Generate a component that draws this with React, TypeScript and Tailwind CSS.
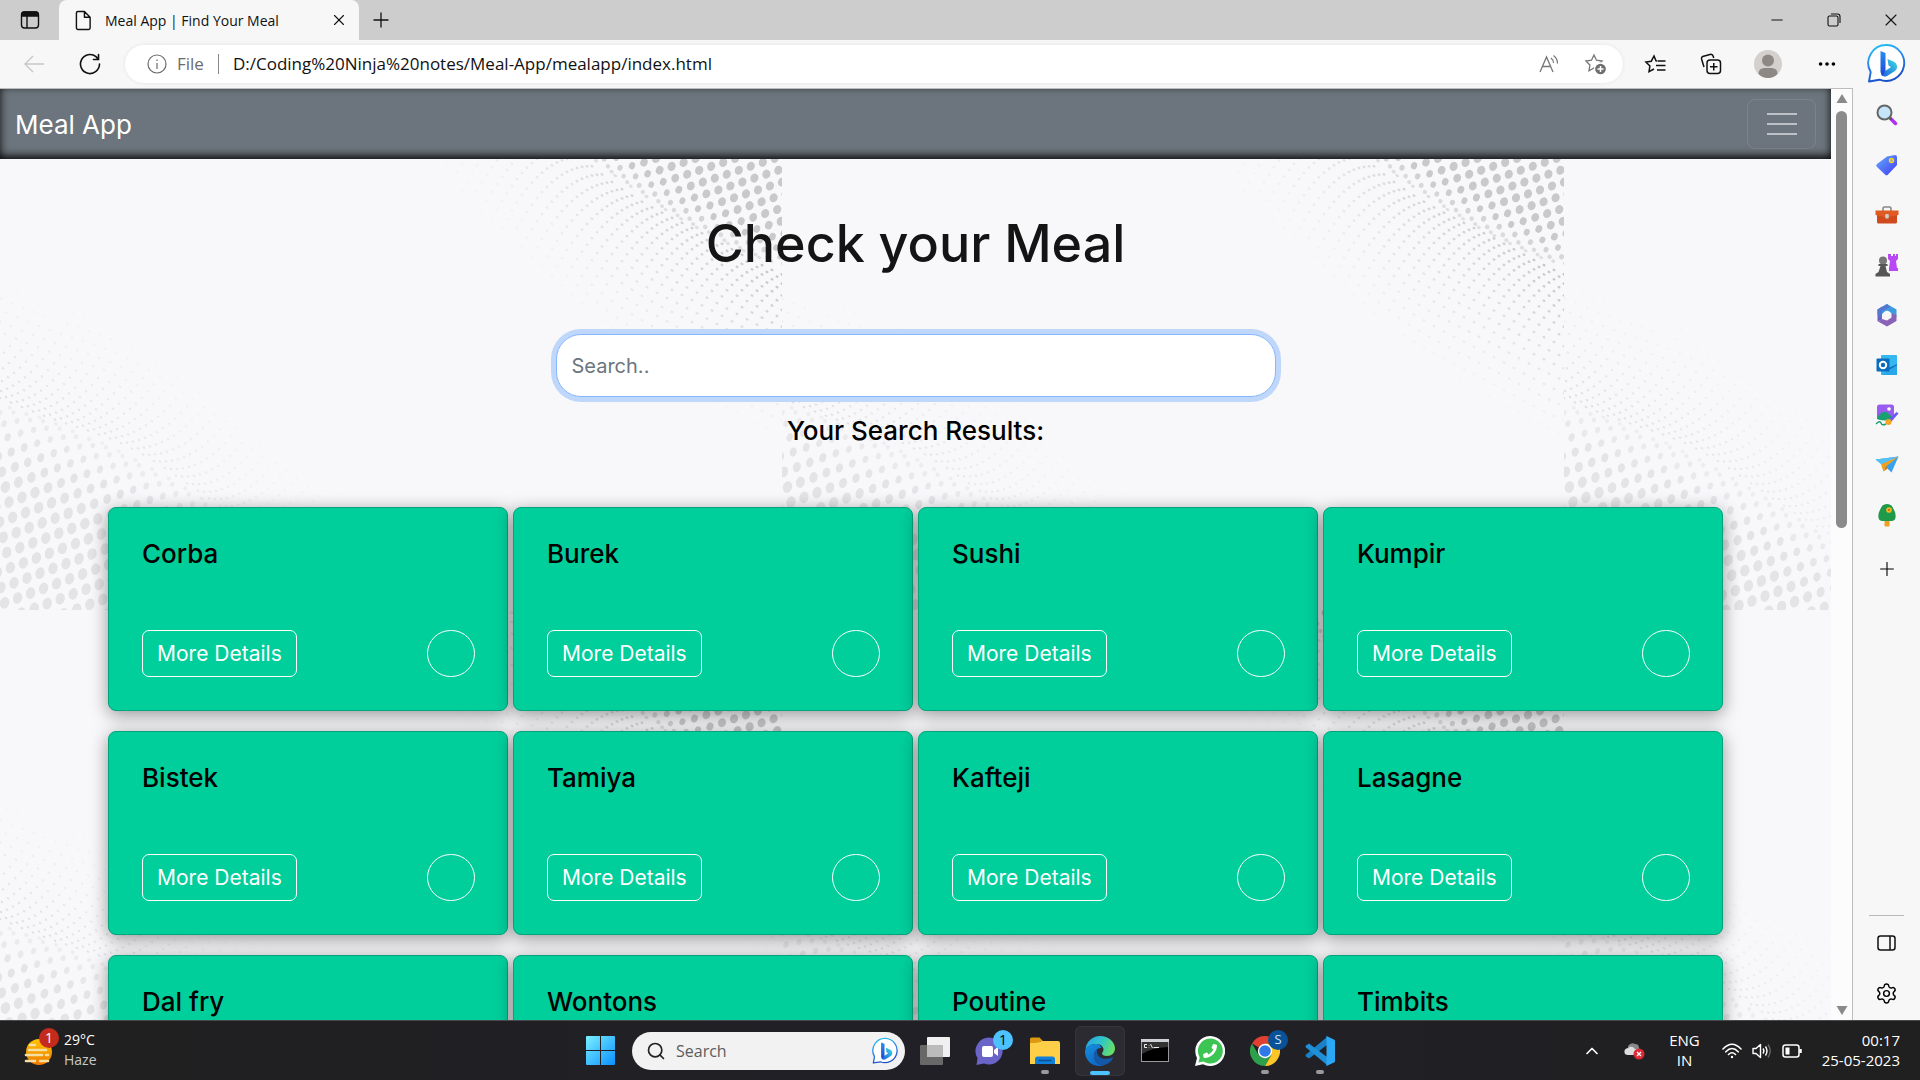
import React from "react";
import { ChevronUp, Minus, MoreHorizontal, Plus, Search, Settings, X } from "lucide-react";
import { FaPhoneAlt } from "react-icons/fa";

const meals = [
  "Corba", "Burek", "Sushi", "Kumpir",
  "Bistek", "Tamiya", "Kafteji", "Lasagne",
  "Dal fry", "Wontons", "Poutine", "Timbits",
];

type Dot = { x: number; y: number; rx: number; ry: number; rot: number; fill: string; o: number };

const TILE_W = 782;
const TILE_H = 521;

const soft = (v: number, s: number) => s * Math.log(1 + Math.exp(v / s));

function buildDots(): Dot[] {
  const dots: Dot[] = [];
  const lowCrease = (x: number) => 314 + 0.3 * x + 0.0008 * x * x;
  for (let j = -12; j < 26; j++) {
    for (let i = -8; i < 36; i++) {
      const x = 13 * i + 3.6 * j + 4;
      if (x < -6 || x > 380) continue;
      const d = 334 + 16.5 * j - 0.37 * x - lowCrease(x);
      if (d < -26) continue;
      const depth = soft(d, 11);
      const y = lowCrease(x) + depth;
      if (y > TILE_H + 8) continue;
      const g = Math.min(1, depth / 80);
      dots.push({ x, y, rx: 2 + 2.6 * g, ry: 1.1 + 4.8 * Math.sqrt(g), rot: 20 - 5 * g, fill: "#e4e4e7", o: Math.min(1, 0.5 + g) });
    }
  }
  for (let k = 0; k < 17; k++) {
    for (let i = -20; i < 40; i++) {
      const x = 11 * i + 6 * k;
      if (x < 0 || x > 440) continue;
      const gap = 5 + k * (3 + k * 0.36);
      const y = lowCrease(x) - gap + 3 * Math.sin(x / 28);
      if (y > TILE_H) continue;
      const o = Math.max(0, 1 - gap / 135) * Math.max(0, 1 - x / 460);
      if (o > 0.04) dots.push({ x, y, rx: 1.5, ry: 1, rot: 35, fill: "#dddde0", o });
    }
  }

  const highCrease = (x: number) => {
    const t = TILE_W - x;
    return 178 - 0.36 * t - 0.0011 * t * t;
  };
  for (let j = -14; j < 26; j++) {
    for (let i = -10; i < 34; i++) {
      const x = TILE_W + 6 - 12 * i - 3.6 * j;
      if (x < 440 || x > TILE_W + 6) continue;
      const d = highCrease(x) - (158 - 13 * j + 0.33 * (TILE_W - x));
      if (d < -24) continue;
      const depth = soft(d, 9);
      const y = highCrease(x) - depth;
      if (y < -8) continue;
      const g = Math.min(1, depth / 42);
      dots.push({ x, y, rx: 2 + 2 * g, ry: 1 + 3.6 * Math.sqrt(g), rot: 22, fill: "#c9c9cb", o: Math.min(1, 0.5 + g) });
    }
  }
  for (let k = 0; k < 19; k++) {
    for (let i = -20; i < 60; i++) {
      const x = TILE_W - 10 * i - 5 * k;
      if (x < 260 || x > TILE_W) continue;
      const gap = 5 + k * (4 + k * 0.32);
      const y = highCrease(x) + gap + 3 * Math.sin(x / 30);
      if (y < 0) continue;
      const o = Math.max(0, 1 - gap / 175) * Math.max(0, 1 - (TILE_W - x) / 460);
      if (o > 0.04) dots.push({ x, y, rx: 1.6, ry: 1.2, rot: 30, fill: "#c4c4c7", o });
    }
  }
  return dots;
}

const dots = buildDots();

function Backdrop() {
  return (
    <svg className="absolute inset-0 h-full w-full" aria-hidden="true">
      <defs>
        <pattern id="halftone" width={TILE_W} height={TILE_H} patternUnits="userSpaceOnUse" y={-70}>
          {dots.map((d, n) => (
            <ellipse key={n} cx={d.x} cy={d.y} rx={d.rx} ry={d.ry} fill={d.fill} opacity={d.o} transform={`rotate(${d.rot} ${d.x} ${d.y})`} />
          ))}
        </pattern>
      </defs>
      <rect width="100%" height="100%" fill="url(#halftone)" />
    </svg>
  );
}

function BingBubble({ id, className }: { id: string; className: string }) {
  return (
    <svg viewBox="0 0 40 40" className={className} aria-hidden="true">
      <defs>
        <linearGradient id={`${id}-ring`} x1="0" y1="0" x2="0.3" y2="1">
          <stop offset="0" stopColor="#22c8f0" />
          <stop offset="0.5" stopColor="#2a86ee" />
          <stop offset="1" stopColor="#1a50c8" />
        </linearGradient>
        <linearGradient id={`${id}-b`} x1="0" y1="0" x2="0" y2="1">
          <stop offset="0" stopColor="#2b8df0" />
          <stop offset="1" stopColor="#1b48d8" />
        </linearGradient>
        <linearGradient id={`${id}-bowl`} x1="0" y1="1" x2="1" y2="0">
          <stop offset="0" stopColor="#1d5be0" />
          <stop offset="1" stopColor="#3be0e0" />
        </linearGradient>
      </defs>
      <path d="M20 2a18 18 0 1 1-7.500 34.700L2 38.500l1.700-9.500A18 18 0 0 1 20 2z" fill="#fff" stroke={`url(#${id}-ring)`} strokeWidth="1.900" strokeLinejoin="round" />
      <path d="M20.500 16l6 2.500a5.500 5.500 0 0 1 1.500 9.500L20 33c-3 1.500-6 0-6-2.500l8-5 2-1.500-2.500-1.500z" fill={`url(#${id}-bowl)`} />
      <path d="M13.500 8l5 2v17.500l-2 4.500c-2-.2-3-1.500-3-3.500z" fill={`url(#${id}-b)`} />
    </svg>
  );
}

const rail: { name: string; icon: React.ReactNode }[] = [
  { name: "Search", icon: <><path d="M15.500 15.500l5 5" stroke="#b030f0" strokeWidth="3.500" strokeLinecap="round" /><path d="M14 14l2.500 2.500" stroke="#555" strokeWidth="2" /><circle cx="9.500" cy="9.500" r="7" fill="#c5e6fa" stroke="#666" strokeWidth="2" /></> },
  { name: "Shopping", icon: <><defs><linearGradient id="tagG" x1="0" y1="0" x2="1" y2="1"><stop offset="0" stopColor="#62b0ff" /><stop offset="1" stopColor="#4338f0" /></linearGradient></defs><path d="M12 3.500 20 2a2 2 0 0 1 2 2v8L13 21.500a2 2 0 0 1-3 0L2 14a2 2 0 0 1 0-3z" fill="url(#tagG)" /><circle cx="16.500" cy="7.500" r="2" fill="#9ab" stroke="#ffcf20" strokeWidth="1.500" /></> },
  { name: "Tools", icon: <><path d="M8 8V5.500q0-1.500 1.500-1.500h5q1.500 0 1.500 1.500V8" fill="none" stroke="#888" strokeWidth="1.600" /><rect x="2" y="9" width="20" height="11.500" rx="1.500" fill="#cf4a1c" /><path d="M0.500 7.500h23V12l-9 2h-5l-9-2z" fill="#e05a22" /><rect x="10.200" y="11" width="3.600" height="4.500" rx="1" fill="#ccc" /></> },
  { name: "Games", icon: <><path d="M14 1h2v2h2V1h2v2h1V1h2v5l-2 2 1 7h1v3h-9v-3l1-7-2-2V1z" fill="#b848f5" /><circle cx="8" cy="7.500" r="4" fill="#777" /><path d="M3.500 11h9v2h-2l1.500 6 3 2v2.500H.500V21l3-2L5.500 13h-2z" fill="#555" /></> },
  { name: "Microsoft 365", icon: <><path d="M12 1l9.500 5.500v7L16 10 12 7.500 7 11V4z" fill="#3d9be0" /><path d="M7 3.500v13l-4.500 2V6.500z" fill="#6a62c8" /><path d="M21.500 12v6L12 23.500 3 18.500l4-2.500 5 1.500 4.500-3V10z" fill="#8a63b8" /><path d="M12 1L2.500 6.500V12L7 15V8l8-4z" fill="#5676d0" /><circle cx="12" cy="12" r="4" fill="#f7f7f7" /></> },
  { name: "Outlook", icon: <><rect x="6" y="2" width="16" height="20" rx="1" fill="#35b8f1" /><path d="M6 12l16 8V11l-8 4z" fill="#1267b4" /><path d="M22 12v10H6z" fill="#28a8ea" /><rect x="1.500" y="5.500" width="13" height="13" rx="1" fill="#0a6cbd" /><circle cx="8" cy="12" r="3.200" fill="none" stroke="#fff" strokeWidth="2" /></> },
  { name: "Image creator", icon: <><rect x="2" y="1.500" width="17" height="15" rx="2.500" fill="#9a5cf0" /><path d="M2 15q6-9 11-5l6 6q-8 3-17 0z" fill="#18a070" /><circle cx="14" cy="6" r="1.800" fill="#fff" /><path d="M13.500 16.500L21.500 9l2 1.500-7.500 8.500z" fill="#6a5af0" /><circle cx="13.500" cy="19" r="3" fill="#f5a623" /><path d="M1 21q4-4 5-1t5 1" stroke="#18a070" strokeWidth="1.400" fill="none" /></> },
  { name: "Drop", icon: <><path d="M0.500 6.500l23-3-7 16-5-5z" fill="#3aa0f0" /><path d="M0.500 6.500l23-3L7 12z" fill="#56c0f5" /><path d="M23.500 3.500L6 11.500l2.500 7 2.500-5z" fill="#f0a020" /><path d="M11 13l-2.500 5.500 4-3z" fill="#d07808" /></> },
  { name: "Tree", icon: <><rect x="9.500" y="15" width="5" height="8.500" rx="1" fill="#f0a020" /><path d="M12 1c5 0 6 4 7 6 2 3 3 11-2 11H7C2 18 3 10 5 7c1-2 2-6 7-6z" fill="#1f9a4a" /><circle cx="14" cy="7" r="2.800" fill="#f5b820" /><circle cx="14" cy="7" r="1.100" fill="#d86010" /></> },
];

const railButton = "flex h-[50px] w-full items-center justify-center";

function SideRail() {
  return (
    <aside aria-label="Sidebar" className="flex w-[67px] shrink-0 flex-col items-center bg-[#f7f7f7]">
      <button aria-label="Bing chat" className="flex h-[50px] items-center justify-center pb-1">
        <BingBubble id="rail-bing" className="h-10 w-10" />
      </button>
      {rail.map((r) => (
        <button key={r.name} aria-label={r.name} className={railButton}>
          <svg viewBox="0 0 24 24" className="h-6 w-6">{r.icon}</svg>
        </button>
      ))}
      <button aria-label="Customize" className="mt-1 flex h-[50px] items-center justify-center">
        <Plus className="h-[22px] w-[22px]" strokeWidth={1.2} />
      </button>
      <div className="mt-auto h-px w-[35px] bg-[#b8b8b8]" />
      <button aria-label="Hide sidebar" className="mt-0.5 flex h-[50px] items-center justify-center">
        <svg viewBox="0 0 20 18" className="h-[18px] w-5" fill="none" stroke="#111" strokeWidth="1.500">
          <rect x="1" y="2" width="17" height="14" rx="2.500" /><path d="M13 2v14" />
        </svg>
      </button>
      <button aria-label="Settings" className="mb-0.5 flex h-[50px] items-center justify-center">
        <Settings className="h-[23px] w-[23px]" strokeWidth={1.5} />
      </button>
    </aside>
  );
}

function TabStrip() {
  return (
    <header className="flex h-10 shrink-0 items-stretch bg-[#cdcdcd] text-[#111]">
      <button aria-label="Tab actions" className="flex w-[59px] items-center justify-center">
        <svg viewBox="0 0 20 20" className="h-5 w-5" fill="none" stroke="#111" strokeWidth="1.400">
          <rect x="1.500" y="2" width="17" height="16" rx="3" /><path d="M7 6v12" /><path d="M2 5V4q0-2 2-2h12q2 0 2 2v2H2z" fill="#111" />
        </svg>
      </button>
      <div className="flex w-[300px] items-center rounded-t-lg bg-[#f7f7f7] pr-2 pl-4">
        <svg viewBox="0 0 18 22" className="h-[21px] w-[17px]" fill="none" stroke="#111" strokeWidth="1.500" strokeLinejoin="round">
          <path d="M3 1.500h7l6 6V19q0 1.500-1.500 1.500h-11.500Q1.500 20.500 1.500 19V3q0-1.500 1.500-1.500zM10 1.500v6h6" />
        </svg>
        <span className="ml-[13px] flex-1 font-['Open_Sans'] text-[14px]">Meal App | Find Your Meal</span>
        <button aria-label="Close tab" className="flex w-6 items-center justify-center"><X className="h-[18px] w-[18px]" strokeWidth={1.5} /></button>
      </div>
      <button aria-label="New tab" className="flex w-11 items-center justify-center"><Plus className="h-6 w-6" strokeWidth={1.3} /></button>
      <div className="ml-auto flex">
        <button aria-label="Minimize" className="flex w-[57px] items-center justify-center"><Minus className="h-[18px] w-[18px]" strokeWidth={1.3} /></button>
        <button aria-label="Restore" className="flex w-[57px] items-center justify-center">
          <svg viewBox="0 0 14 14" className="h-[14px] w-[14px]" fill="none" stroke="#111" strokeWidth="1.100">
            <rect x="1" y="3" width="10" height="10" rx="1.500" /><path d="M4 1h6.500Q13 1 13 3.500V10" />
          </svg>
        </button>
        <button aria-label="Close" className="flex w-[58px] items-center justify-center"><X className="h-5 w-5" strokeWidth={1.3} /></button>
      </div>
    </header>
  );
}

const STAR = "M10 2l2.500 5.200 5.600.8-4 4 .9 5.700L10 15l-5 2.700.900-5.700-4-4 5.600-.8z";

function Toolbar() {
  return (
    <div className="flex h-12 shrink-0 items-center bg-[#f7f7f7] pl-1.5">
      <button aria-label="Back" className="flex w-14 justify-center">
        <svg viewBox="0 0 20 20" className="h-5 w-5" fill="none" stroke="#c8c8c8" strokeWidth="1.400"><path d="M9 2l-8 8 8 8M1 10h19" /></svg>
      </button>
      <button aria-label="Refresh" className="flex w-14 justify-center">
        <svg viewBox="0 0 22 22" className="h-[22px] w-[22px]" fill="none" stroke="#111" strokeWidth="1.600" strokeLinecap="round"><path d="M20.500 11a9.500 9.500 0 1 1-3.500-7.300L19 6M19.500 1.500V6.500h-5" /></svg>
      </button>
      <div className="mr-1 ml-[7px] flex h-[38px] flex-1 items-center rounded-full bg-white pr-4 pl-[22px] font-['Open_Sans'] shadow-[0_0_4px_rgba(0,0,0,0.08)]">
        <svg viewBox="0 0 20 20" className="h-5 w-5" fill="none" stroke="#6b6b6b" strokeWidth="1.200"><circle cx="10" cy="10" r="9" /><path d="M10 9v6M10 5.500v1.500" /></svg>
        <span className="ml-2.5 text-[17px] text-[#6b6b6b]">File</span>
        <span className="mx-3.5 h-5 w-px bg-[#888]" />
        <input aria-label="Address" readOnly value="D:/Coding%20Ninja%20notes/Meal-App/mealapp/index.html" className="min-w-0 flex-1 bg-transparent text-[17px] text-[#111] outline-none" />
        <button aria-label="Read aloud" className="mr-6">
          <svg viewBox="0 0 21 20" className="h-5 w-[21px]" fill="none" stroke="#777" strokeWidth="1.300"><path d="M1 18L7.500 3 14 18M3.500 12.500h8M12 4q2.500 2 2.500 5M14.500 1.500q4 3 4 8" /></svg>
        </button>
        <button aria-label="Add to favorites">
          <svg viewBox="0 0 23 22" className="h-[22px] w-[23px]" fill="none" stroke="#777" strokeWidth="1.300"><path d={STAR} /><circle cx="16.500" cy="16" r="6" fill="#6f6f6f" stroke="#fff" /><path d="M16.500 13v6M13.500 16h6" stroke="#fff" strokeWidth="1.500" /></svg>
        </button>
      </div>
      <button aria-label="Favorites" className="flex w-14 justify-center">
        <svg viewBox="0 0 22 20" className="h-5 w-[22px]" fill="none" stroke="#111" strokeWidth="1.500"><path d="M13 7l-1-.2L10 2 7.300 7.200 1.900 8l4 4L5 17.700 10 15M13.500 7h8M12 11.500h9.500M13 16h8.500" /></svg>
      </button>
      <button aria-label="Collections" className="flex w-14 justify-center">
        <svg viewBox="0 0 22 22" className="h-[22px] w-[22px]" fill="none" stroke="#111" strokeWidth="1.500"><path d="M4 14L1.700 6.500Q1 4 3.500 3.300L10 1.500q2.500-.7 3.300 2l.4 1.500" /><rect x="7" y="7" width="13.500" height="13.500" rx="3" /><path d="M13.750 10v7.500M10 13.750h7.500" /></svg>
      </button>
      <button aria-label="Profile" className="flex w-[58px] justify-center">
        <svg viewBox="0 0 28 28" className="h-7 w-7"><circle cx="14" cy="14" r="14" fill="#d3d0cd" /><circle cx="14" cy="10.500" r="6" fill="#8d8884" /><path d="M4.500 24q0-6 6-6h7q6 0 6 6-4 4-9.500 4t-9.500-4z" fill="#8d8884" /></svg>
      </button>
      <button aria-label="Menu" className="flex w-14 justify-center pl-1"><MoreHorizontal className="h-[22px] w-[22px]" strokeWidth={2} /></button>
    </div>
  );
}

function MealCard({ name }: { name: string }) {
  return (
    <article className="flex h-[204px] flex-col rounded-lg border border-[#00a57c] bg-[#00ce9b] pt-[30px] pr-8 pb-[33px] pl-[33px] shadow-[0_4px_18px_rgba(0,0,0,0.4)]">
      <h3 className="text-[26px] leading-8 font-medium text-black">{name}</h3>
      <div className="mt-auto flex justify-between">
        <button className="h-[47px] rounded-[7px] border border-white px-3.5 text-[21px] text-white">More Details</button>
        <button aria-label={`Favourite ${name}`} className="h-[47px] w-12 rounded-full border border-white" />
      </div>
    </article>
  );
}

function MealPage() {
  return (
    <div className="flex min-w-0 flex-1 flex-col overflow-hidden font-['Inter',sans-serif]">
      <nav className="flex h-[70px] shrink-0 items-center justify-between bg-[#6c757d] px-[15px] shadow-[inset_0_-3px_8px_rgba(0,0,0,0.95)]">
        <a href="#home" className="text-[26px] text-white">Meal App</a>
        <button aria-label="Toggle navigation" className="flex h-[50px] w-[69px] flex-col items-center justify-center gap-2 rounded-lg border border-white/10">
          <span className="h-0.5 w-[30px] bg-white/55" />
          <span className="h-0.5 w-[30px] bg-white/55" />
          <span className="h-0.5 w-[30px] bg-white/55" />
        </button>
      </nav>
      <main className="relative flex min-h-0 flex-1 flex-col overflow-hidden bg-[#f8f8fa]">
        <Backdrop />
        <div className="relative flex flex-col items-center">
          <h1 className="mt-[55px] text-[52px] leading-[60px] font-medium text-[#141414]">Check your Meal</h1>
          <input
            type="search"
            aria-label="Search meals"
            placeholder="Search.."
            className="mt-[60px] h-[63px] w-[720px] max-w-full rounded-[25px] border border-[#86b7fe] bg-white px-[15px] text-[20px] shadow-[0_0_0_5px_#bfd7fb] outline-none placeholder:text-[#6c757d]"
          />
          <h2 className="mt-[19px] text-[26px] leading-[30px] font-medium text-black">Your Search Results:</h2>
          <section aria-label="Meals" className="mt-[61px] grid w-[88.2%] grid-cols-4 gap-x-[5px] gap-y-5">
            {meals.map((m) => <MealCard key={m} name={m} />)}
          </section>
        </div>
      </main>
    </div>
  );
}

function ScrollTrack() {
  return (
    <div className="flex w-[22px] shrink-0 flex-col items-center border-r border-[#bdbdbd] bg-[#fcfcfc] py-[5px]" aria-hidden="true">
      <svg viewBox="0 0 12 9" className="h-[9px] w-3"><path d="M6 0l5.500 9H.5z" fill="#8a8a8a" /></svg>
      <div className="mt-2 h-[45.3%] w-[11px] rounded-full bg-[#8b8b8b]" />
      <svg viewBox="0 0 12 9" className="mt-auto h-[9px] w-3"><path d="M6 9l5.500-9H.5z" fill="#8a8a8a" /></svg>
    </div>
  );
}

function TaskButton({ label, running, active, children }: { label: string; running?: boolean; active?: boolean; children: React.ReactNode }) {
  return (
    <button aria-label={label} className={`relative flex h-[50px] w-[50px] items-center justify-center rounded-md ${active ? "border border-white/5 bg-white/5" : ""}`}>
      {children}
      {running && <span className="absolute bottom-0.5 h-1 w-2 rounded-full bg-[#9a9a9d]" />}
      {active && <span className="absolute bottom-0 h-1 w-5 rounded-full bg-[#4cc2ff]" />}
    </button>
  );
}

function Taskbar() {
  return (
    <footer className="grid h-[60px] shrink-0 grid-cols-[1fr_auto_1fr] items-center border-t border-[#4a4a4c] bg-[linear-gradient(90deg,#202020,#202026_40%,#202026_65%,#202020)] font-['Open_Sans'] text-white">
      <div className="flex items-center pl-6">
        <span className="relative">
          <svg viewBox="0 0 32 34" className="h-[34px] w-8" aria-hidden="true">
            <defs><linearGradient id="sunG" x1="0" y1="0" x2="0" y2="1"><stop offset="0" stopColor="#ffc400" /><stop offset="1" stopColor="#f07800" /></linearGradient></defs>
            <circle cx="15" cy="18" r="13" fill="url(#sunG)" />
            <path d="M6 11h5M5 16h17M2 21h16M22 21h2M2 27h9M16 27h8" stroke="#f4dfa0" strokeWidth="2.600" strokeLinecap="round" />
          </svg>
          <span className="absolute -top-1.5 left-[15px] flex h-5 w-5 items-center justify-center rounded-full bg-[#c42b1c] text-[14px]">1</span>
        </span>
        <span className="ml-2 flex flex-col pb-0.5 text-[14px] leading-5"><span>29°C</span><span className="text-[#c8c8c8]">Haze</span></span>
      </div>
      <div className="flex items-center gap-[5px]">
        <TaskButton label="Start">
          <svg viewBox="0 0 29 29" className="h-[29px] w-[29px]">
            <defs><linearGradient id="winG" gradientUnits="userSpaceOnUse" x1="0" y1="0" x2="29" y2="29"><stop offset="0" stopColor="#7af0ff" /><stop offset="1" stopColor="#0a90ff" /></linearGradient></defs>
            <path d="M0 1q0-1 1-1h13v14H0zM15 0h13q1 0 1 1v13H15zM0 15h14v14H1q-1 0-1-1zM15 15h14v13q0 1-1 1H15z" fill="url(#winG)" />
          </svg>
        </TaskButton>
        <div className="ml-0.5 flex h-[38px] w-[273px] items-center rounded-full bg-[#f2f2f2] pr-1.5 pl-3.5 text-[#222]">
          <Search className="h-5 w-5" strokeWidth={2} />
          <input aria-label="Taskbar search" placeholder="Search" className="ml-2.5 min-w-0 flex-1 bg-transparent text-[16px] outline-none placeholder:text-[#5c5c5c]" />
          <BingBubble id="task-bing" className="h-[27px] w-[27px]" />
        </div>
        <TaskButton label="Task view">
          <svg viewBox="0 0 30 28" className="h-7 w-[30px]"><rect x="7" y="0" width="23" height="20" rx="1" fill="#f0f0f0" /><rect x="0" y="8" width="23" height="20" rx="1" fill="#686868" /><rect x="7" y="8" width="16" height="12" fill="#bbb" /></svg>
        </TaskButton>
        <TaskButton label="Chat">
          <svg viewBox="0 0 30 30" className="h-[30px] w-[30px]"><path d="M14.500 1.500A13.500 13.500 0 1 1 9 27.500L1.500 29l1-7A13.500 13.500 0 0 1 14.500 1.500z" fill="#6a63c8" /><rect x="7" y="10" width="11" height="11" rx="2" fill="#fff" /><path d="M19 14l4-3v9l-4-3z" fill="#fff" /></svg>
          <span className="absolute top-1 right-0.5 flex h-5 w-5 items-center justify-center rounded-full bg-[#4cc2ff] text-[14px] text-black">1</span>
        </TaskButton>
        <TaskButton label="File Explorer" running>
          <svg viewBox="0 0 30 27" className="h-[27px] w-[30px]"><path d="M0 2q0-1.500 1.500-1.500h8L13 4h-2l-2 3H0z" fill="#dd9a10" /><path d="M0 6q4 0 9-.5L11.500 4H28q2 0 2 2v21H0z" fill="#ffcf48" /><path d="M5 27v-5q0-2.500 2.500-2.500h15Q25 19.500 25 22v5z" fill="#1080d8" /><path d="M8.500 23.500h13" stroke="#0a4f90" strokeWidth="1.500" /></svg>
        </TaskButton>
        <TaskButton label="Microsoft Edge" active>
          <svg viewBox="0 0 30 30" className="h-[30px] w-[30px]">
            <defs>
              <linearGradient id="edgeA" x1="0" y1="0.3" x2="1" y2="0.6"><stop offset="0" stopColor="#2aa5e8" /><stop offset="0.5" stopColor="#30c5c8" /><stop offset="1" stopColor="#6be060" /></linearGradient>
              <linearGradient id="edgeB" x1="0" y1="0" x2="0.5" y2="1"><stop offset="0" stopColor="#1690e0" /><stop offset="1" stopColor="#0f68c4" /></linearGradient>
            </defs>
            <path d="M0.500 13C1.500 5.500 7.500 0 15 0c8.500 0 15 6 15 12.500 0 4.500-3.500 7.500-8 7.500-3.500 0-5-1.500-5-2.500s1.500-1.500 1.500-4S16 8 11 8C5.500 8 2 11 .5 13z" fill="url(#edgeA)" />
            <path d="M11.500 8C5.500 7.500.5 11 0 15.500 0 24 6.500 30 14 30c2 0 3.500-.3 5-1-7.500 0-10.500-5-10-10 .3-4 3-6.500 7.500-7.500-1-2-3-3.400-5-3.500z" fill="url(#edgeB)" />
            <path d="M12 13.500C8 16.500 8 22 11 26c3 3.500 7 4 10 2.500 3-1.300 5.500-3.500 7-6.300.3-.7-.3-1-1-.7-8 3.500-16 0-15-8z" fill="#1458a8" />
          </svg>
        </TaskButton>
        <TaskButton label="Command Prompt">
          <svg viewBox="0 0 28 23" className="h-[23px] w-7"><rect x="0.500" y="0.500" width="27" height="22" fill="#000" stroke="#999" /><path d="M0 0h28v3H0z" fill="#cfd3d8" /><path d="M1 3h26v5Q10 9 1 15z" fill="#333" /><path d="M6 5.500H3.500v3H6M8 6v.5M8 8v.5M9.500 5l2 4M12.500 8.500H18" stroke="#eee" fill="none" /></svg>
        </TaskButton>
        <TaskButton label="WhatsApp">
          <svg viewBox="0 0 30 30" className="h-[30px] w-[30px]"><path d="M15 0a15 15 0 1 1-7 28.200L0 30l2-8A15 15 0 0 1 15 0z" fill="#fff" /><path d="M15 2.500a12.500 12.500 0 1 1-6.500 23L3.500 26.500l1.200-5A12.500 12.500 0 0 1 15 2.500z" fill="#3cc552" /></svg>
          <FaPhoneAlt className="absolute h-3.5 w-3.5 -scale-x-100 text-white" />
        </TaskButton>
        <TaskButton label="Google Chrome" running>
          <svg viewBox="0 0 30 30" className="h-[30px] w-[30px]"><path d="M15 15L2 7.500A15 15 0 0 1 28 7.500H15z" fill="#e04030" /><path d="M15 15l6.500 3.700L15 30A15 15 0 0 1 2 7.500l6.500 11.200z" fill="#2da04c" /><path d="M15 7.500h13A15 15 0 0 1 15 30l6.500-11.200z" fill="#fcc629" /><circle cx="15" cy="15" r="7.200" fill="#fff" /><circle cx="15" cy="15" r="5.800" fill="#2f78e8" /></svg>
          <span className="absolute top-1 right-0.5 flex h-5 w-5 items-center justify-center rounded-full bg-[#0a5298] text-[13px] text-[#cfe0f5]">S</span>
        </TaskButton>
        <TaskButton label="Visual Studio Code" running>
          <svg viewBox="0 0 30 30" className="h-[30px] w-[30px]"><path d="M22 1v8L4 22.500 1 20.500q-1-1 0-2z" fill="#1a80c8" /><path d="M22 29v-8L4 7.500 1 9.500q-1 1 0 2z" fill="#1f90d8" /><path d="M21.500 0L29 3.500q1 .5 1 1.500v20q0 1-1 1.500L21.500 30q-.5-.5 0-1.500v-27q-.5-1 0-1.500z" fill="#2ba8f5" /></svg>
        </TaskButton>
      </div>
      <div className="flex items-center justify-end pr-5">
        <button aria-label="Hidden icons" className="mr-[22px]"><ChevronUp className="h-5 w-5" strokeWidth={2} /></button>
        <svg viewBox="0 0 21 18" className="mr-6 h-[18px] w-[21px]" aria-label="OneDrive">
          <path d="M4 4q3-4 7-2 4 0 4 4l2 4H4z" fill="#888" /><path d="M1 12q-2-5 3-6 4-3 7 1 4 0 4 4v2H3z" fill="#ddd" /><circle cx="15" cy="12" r="5.500" fill="#d92a35" /><path d="M13 10l4 4M17 10l-4 4" stroke="#fff" strokeWidth="1.300" />
        </svg>
        <button className="mr-[22px] flex flex-col items-center pb-0.5 text-[15px] leading-5"><span>ENG</span><span>IN</span></button>
        <svg viewBox="0 0 20 16" className="mr-2.5 h-4 w-5" fill="none" stroke="#fff" strokeWidth="1.600" strokeLinecap="round" aria-label="Wi-Fi">
          <path d="M1 6q9-9.500 18 0M3.800 8.800q6.200-6.500 12.400 0M6.500 11.500q3.500-3.500 7 0" /><circle cx="10" cy="14" r="1.200" fill="#fff" stroke="none" />
        </svg>
        <svg viewBox="0 0 20 16" className="mr-2.5 h-4 w-5" fill="none" stroke="#fff" strokeWidth="1.400" strokeLinejoin="round" aria-label="Volume">
          <path d="M1 5.500h3L8.500 1.500v13L4 10.500H1zM11 5.500q1.800 2.500 0 5M13.500 3.500q3 4.500 0 9" /><path d="M16 1.500q4.500 6.500 0 13" stroke="#666" />
        </svg>
        <svg viewBox="0 0 20 14" className="mr-5 h-[14px] w-5" fill="none" stroke="#fff" strokeWidth="1.500" aria-label="Battery">
          <rect x="1" y="1" width="16" height="12" rx="2.500" /><rect x="3.500" y="3.500" width="4" height="7" fill="#fff" stroke="none" /><path d="M18.500 5v4" strokeWidth="2.500" />
        </svg>
        <span className="flex flex-col items-end pb-0.5 text-[15px] leading-5"><span>00:17</span><span>25-05-2023</span></span>
      </div>
    </footer>
  );
}

export default function App() {
  return (
    <div className="flex h-screen flex-col overflow-hidden bg-[#f7f7f7]">
      <TabStrip />
      <div className="flex min-h-0 flex-1">
        <div className="flex min-w-0 flex-1 flex-col">
          <Toolbar />
          <div className="flex min-h-0 flex-1 border-t border-[#bdbdbd]">
            <MealPage />
            <ScrollTrack />
          </div>
        </div>
        <SideRail />
      </div>
      <Taskbar />
    </div>
  );
}
